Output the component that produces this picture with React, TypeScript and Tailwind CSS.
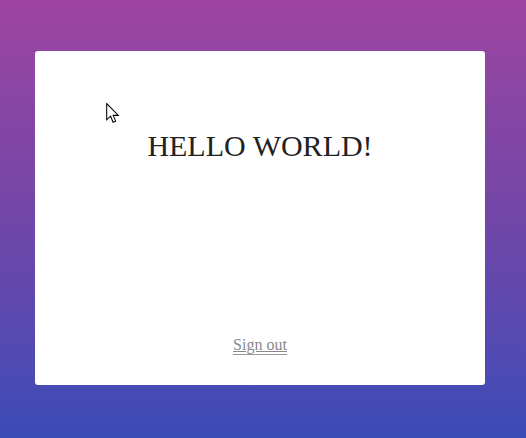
import React from 'react';

function Cursor() {
  return (
    <svg
      width="14"
      height="21"
      viewBox="0 0 13 20"
      className="absolute left-[106px] top-[103px]"
    >
      <path
        d="M0.5 0.5 L0.5 16 L4.2 12.6 L6.6 18.3 L9 17.3 L6.7 11.8 L11.6 11.8 Z"
        fill="#fff"
        stroke="#000"
        strokeWidth="1"
        strokeLinejoin="miter"
      />
    </svg>
  );
}

export default function App() {
  return (
    <div className="relative h-[438px] w-[526px] bg-gradient-to-b from-[#9d44a0] via-[#7146a8] to-[#3a4bb8] pt-[51px] px-[35px] font-['Liberation_Serif',serif]">
      <div className="flex h-[334px] w-[450px] flex-col items-center rounded-[3px] bg-white pt-[78px] pb-[30px]">
        <h1 className="text-[30px] leading-[1.15] text-[#222]">HELLO WORLD!</h1>
        <a
          href="#"
          className="mt-auto border-b border-[#999] text-[16px] leading-[1.15] text-[#888] underline"
        >
          Sign out
        </a>
      </div>
      <Cursor />
    </div>
  );
}
